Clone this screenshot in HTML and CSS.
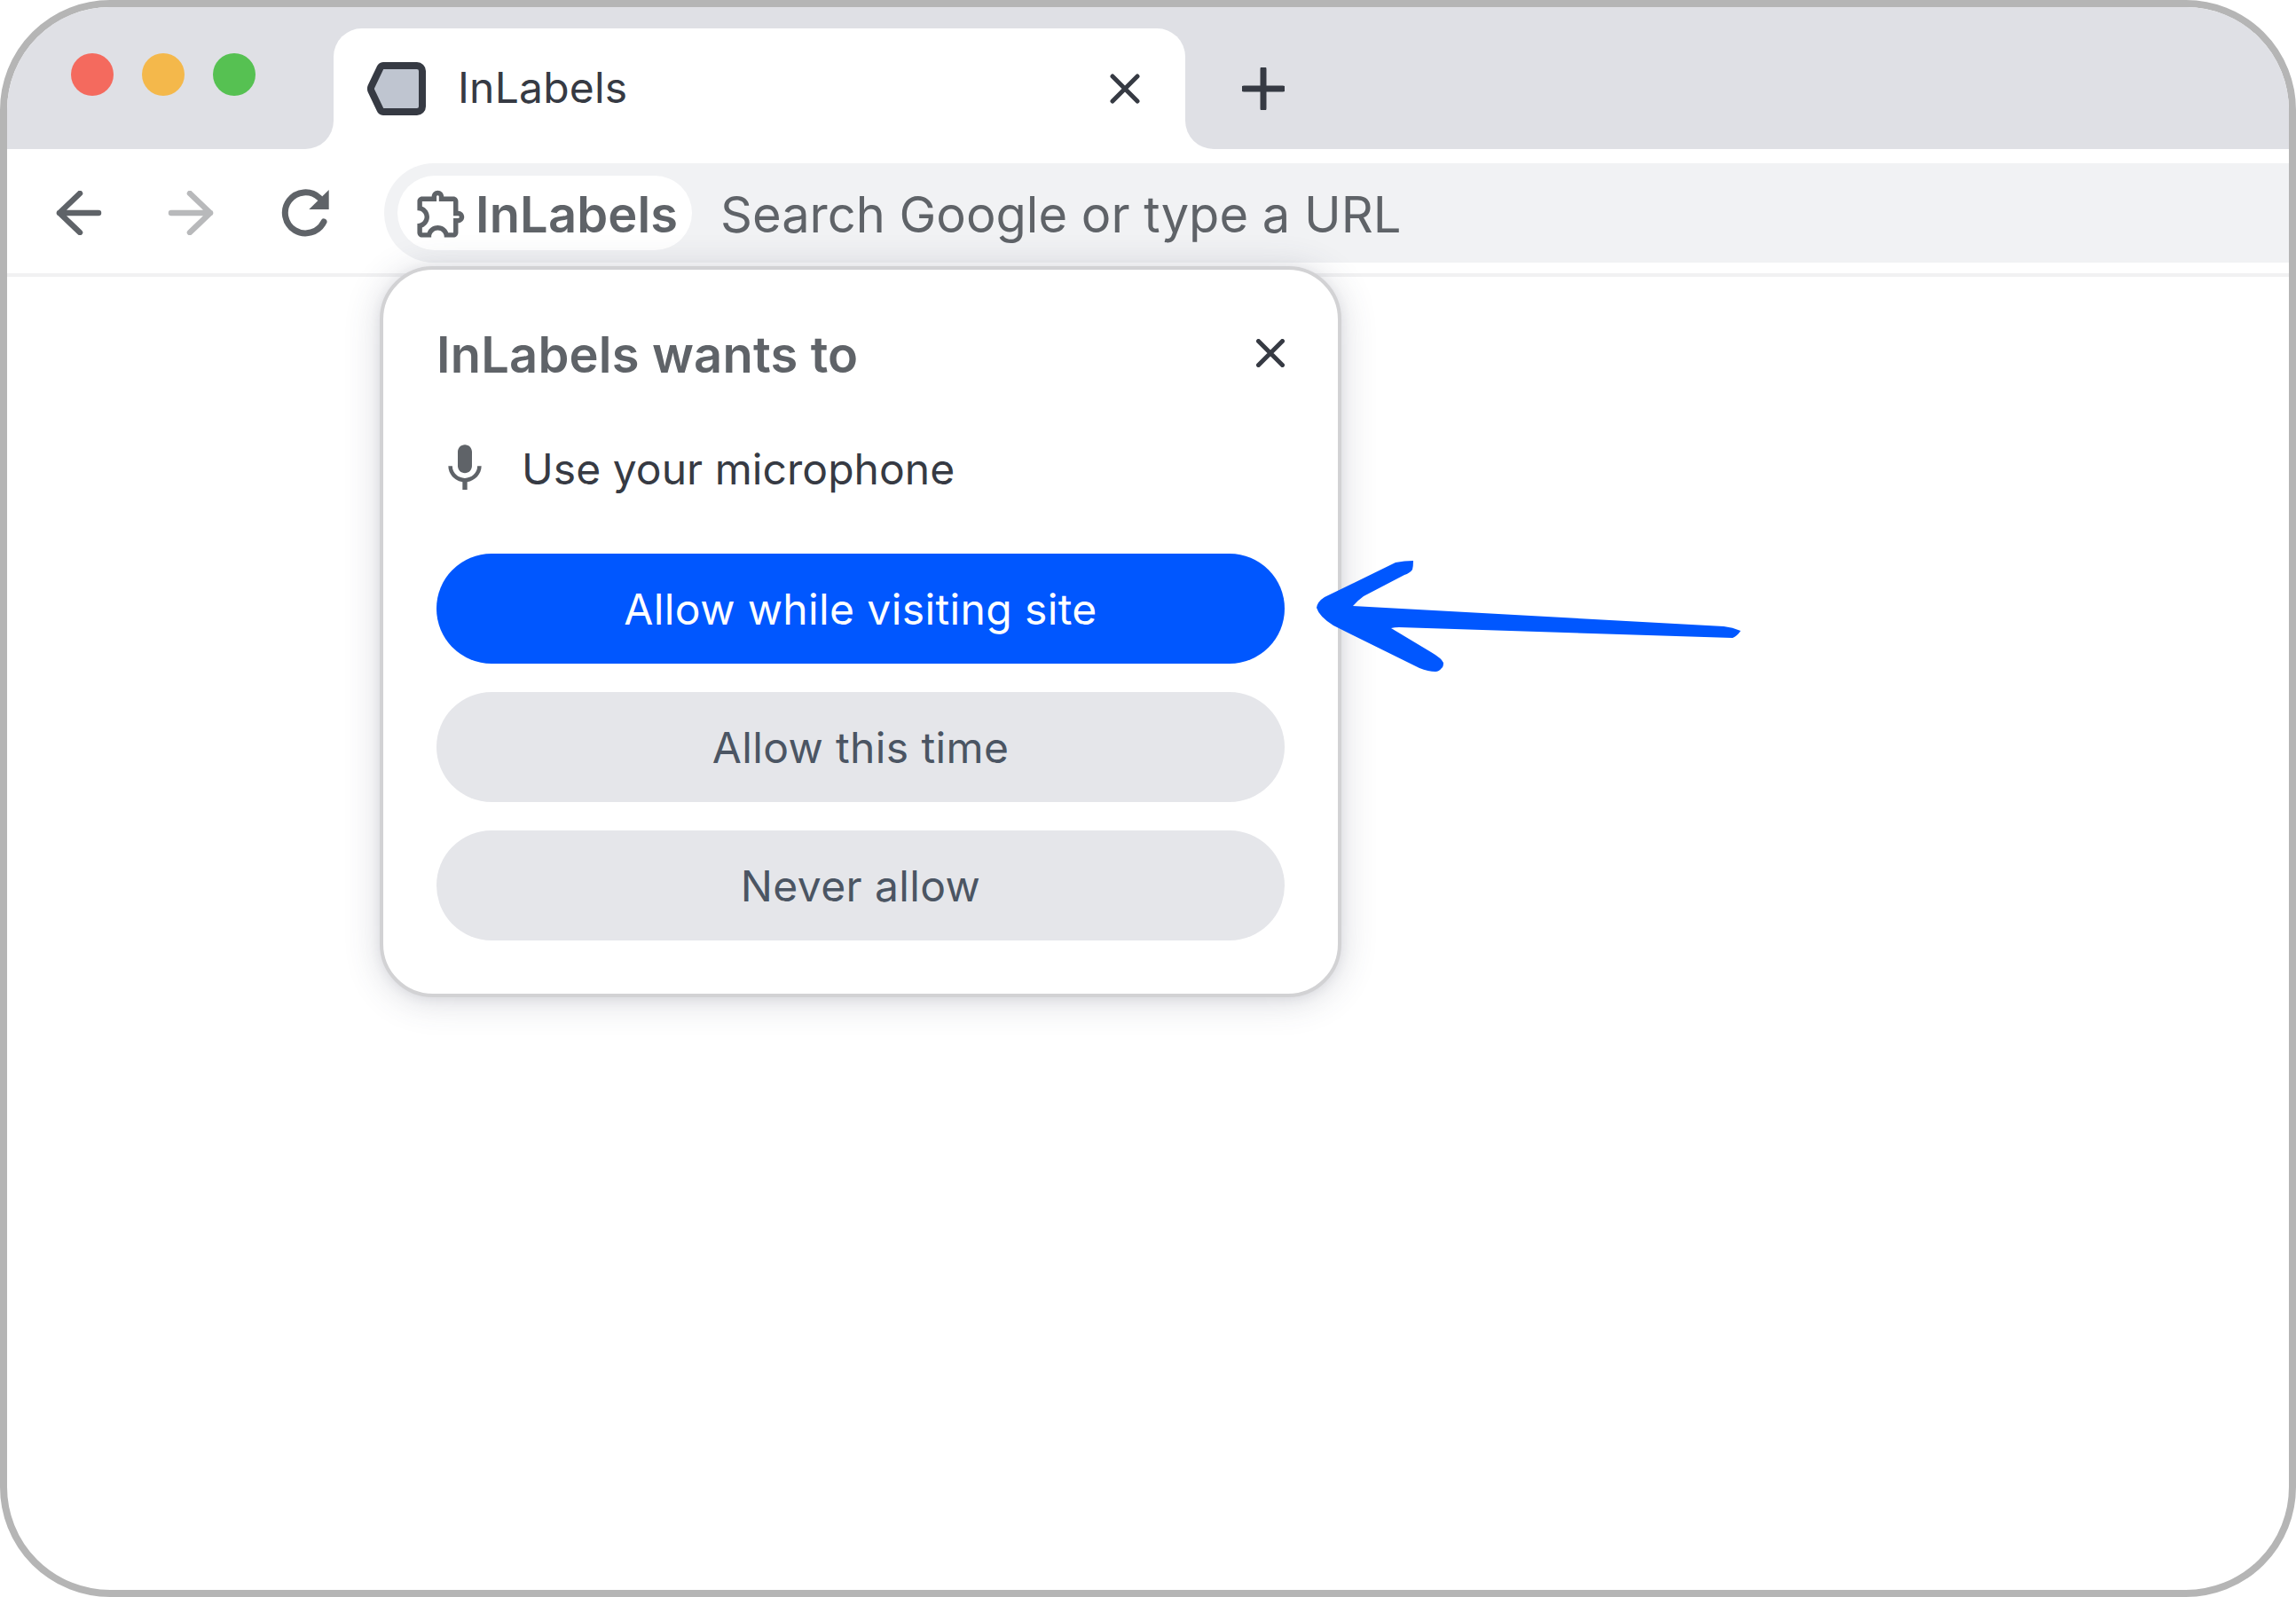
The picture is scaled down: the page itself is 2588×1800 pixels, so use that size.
FILE: index.html
```html
<!DOCTYPE html>
<html lang="en">
<head>
<meta charset="utf-8">
<title>InLabels</title>
<link rel="stylesheet" href="styles.css">
</head>
<body>
<div class="window">
  <header class="strip">
    <div class="strip-left">
      <span class="light red"></span>
      <span class="light yellow"></span>
      <span class="light green"></span>
    </div>
    <div class="tab-slot">
      <div class="tab">
        <svg class="tab-logo" viewBox="0 0 66 60"><path d="M18 4H56A6 6 0 0 1 62 10V50A6 6 0 0 1 56 56H18A4 4 0 0 1 14.5 53.5L4.5 32.5A6 6 0 0 1 4.5 27.5L14.5 6.5A4 4 0 0 1 18 4Z" fill="#BFC5D0" stroke="#363A43" stroke-width="8" stroke-linejoin="round"/></svg>
        <span class="tab-title">InLabels</span>
        <svg class="tab-close" viewBox="0 0 34 34"><path d="M3 3L31 31M31 3L3 31" fill="none" stroke="#363A43" stroke-width="5" stroke-linecap="round"/></svg>
      </div>
    </div>
    <div class="strip-right">
      <svg class="new-tab" viewBox="0 0 48 48"><path d="M24 2V46M2 24H46" fill="none" stroke="#363A43" stroke-width="7" stroke-linecap="round"/></svg>
    </div>
  </header>
  <nav class="toolbar">
    <svg class="nav-icon" viewBox="0 0 52 50"><path d="M48 25H4M27 3L4 25L27 47" fill="none" stroke="#5F6368" stroke-width="6.5" stroke-linecap="round" stroke-linejoin="round"/></svg>
    <svg class="nav-icon" viewBox="0 0 52 50"><path d="M4 25H48M25 3L48 25L25 47" fill="none" stroke="#B8B9BB" stroke-width="6.5" stroke-linecap="round" stroke-linejoin="round"/></svg>
    <svg class="nav-icon reload" viewBox="0 0 56 54"><path d="M45 10A23 23 0 1 0 50 37" fill="none" stroke="#5F6368" stroke-width="7" stroke-linecap="round"/><path d="M55.7 1V23H33.3Z" fill="#5F6368"/></svg>
    <div class="address">
      <div class="chip">
        <svg class="puzzle" viewBox="0 0 24 24"><path d="M10.5 4.5c.28 0 .5.22.5.5v2h6v6h2c.28 0 .5.22.5.5s-.22.5-.5.5h-2v6h-2.12c-.68-1.75-2.39-3-4.38-3s-3.7 1.25-4.38 3H4v-2.12c1.75-.68 3-2.39 3-4.38 0-1.99-1.24-3.7-2.99-4.38L4 7h6V5c0-.28.22-.5.5-.5m0-2C9.12 2.5 8 3.62 8 5H4c-1.1 0-1.99.9-1.99 2v3.8h.29c1.49 0 2.7 1.21 2.7 2.7s-1.21 2.7-2.7 2.7H2V20c0 1.1.9 2 2 2h3.8v-.3c0-1.49 1.21-2.7 2.7-2.7s2.7 1.21 2.7 2.7v.3H17c1.1 0 2-.9 2-2v-4c1.38 0 2.5-1.12 2.5-2.5S20.38 11 19 11V7c0-1.1-.9-2-2-2h-4c0-1.38-1.12-2.5-2.5-2.5z" fill="#5F6368"/></svg>
        <span class="chip-text">InLabels</span>
      </div>
      <span class="address-text">Search Google or type a URL</span>
    </div>
  </nav>
  <div class="rule"></div>
  <section class="popup">
    <div class="popup-head">
      <h1 class="popup-title">InLabels wants to</h1>
      <svg class="popup-close" viewBox="0 0 32 32"><path d="M2.5 2.5L29.5 29.5M29.5 2.5L2.5 29.5" fill="none" stroke="#363A43" stroke-width="5" stroke-linecap="round"/></svg>
    </div>
    <div class="permission">
      <svg class="mic" viewBox="0 0 24 24"><path d="M12 14c1.66 0 2.99-1.34 2.99-3L15 5c0-1.66-1.34-3-3-3S9 3.34 9 5v6c0 1.66 1.34 3 3 3zm5.3-3c0 3-2.54 5.1-5.3 5.1S6.7 14 6.7 11H5c0 3.41 2.72 6.23 6 6.72V21h2v-3.28c3.28-.48 6-3.3 6-6.72h-1.7z" fill="#5F6368"/></svg>
      <span class="permission-text">Use your microphone</span>
    </div>
    <div class="actions">
      <button class="btn primary">Allow while visiting site</button>
      <button class="btn">Allow this time</button>
      <button class="btn">Never allow</button>
    </div>
  </section>
  <svg class="arrow" viewBox="0 0 490 130"><path d="M9 53Q10 46 18 41L98 2Q108 0 118 0Q118 6 117 10Q114 14 108 16L62 40Q55 45 50 51L468 74Q478 75 487 79Q483 85 478 87L102 75Q97 75 93 76L138 103Q150 110 152 115Q152 120 150 121Q147 125 143 125Q135 125 125 121L28 73Q12 63 9 53Z" fill="#0057FF"/></svg>
</div>
</body>
</html>
```

FILE: styles.css
```css
* { box-sizing: border-box; }
html, body { margin: 0; padding: 0; background: #fff; }
body { width: 2588px; height: 1800px; overflow: hidden; font-family: Inter, "Liberation Sans", sans-serif; }

.window {
  position: relative;
  width: 2588px;
  height: 1800px;
  border: 8px solid #B5B5B5;
  border-radius: 124px;
  overflow: hidden;
  background: #fff;
}

.strip { display: flex; height: 160px; }
.strip-left {
  display: flex;
  gap: 32px;
  width: 368px;
  padding: 52px 0 0 72px;
  background: #DFE0E5;
  border-bottom-right-radius: 32px;
}
.light { width: 48px; height: 48px; border-radius: 50%; }
.red { background: #F46A5E; }
.yellow { background: #F4B84B; }
.green { background: #56C152; }

.tab-slot { width: 960px; padding-top: 24px; background: #DFE0E5; }
.tab {
  display: flex;
  align-items: center;
  height: 136px;
  padding: 0 51px 0 38px;
  background: #fff;
  border-radius: 32px 32px 0 0;
}
.tab-logo { width: 66px; height: 60px; flex: none; }
.tab-title { margin: 0 0 4px 36px; font-size: 48px; letter-spacing: 0.2px; color: #363A43; }
.tab-close { width: 34px; height: 34px; margin-left: auto; flex: none; }

.strip-right {
  flex: 1;
  display: flex;
  padding: 68px 0 0 64px;
  background: #DFE0E5;
  border-bottom-left-radius: 32px;
}
.new-tab { width: 48px; height: 48px; }

.toolbar {
  display: flex;
  align-items: center;
  height: 140px;
  padding: 16px 0 12px 55px;
}
.nav-icon { width: 52px; height: 50px; flex: none; margin-right: 74px; }
.nav-icon.reload { width: 56px; height: 54px; margin-right: 62px; }
.address {
  flex: 1;
  display: flex;
  align-items: center;
  height: 112px;
  padding-left: 15px;
  background: #F1F2F4;
  border-radius: 56px 0 0 56px;
}
.chip {
  display: flex;
  align-items: center;
  width: 332px;
  height: 84px;
  padding-left: 21px;
  background: #fff;
  border-radius: 42px;
}
.puzzle { width: 65px; height: 65px; margin-left: -4px; flex: none; }
.chip-text { margin: 4px 0 0 6px; font-size: 56px; font-weight: 560; letter-spacing: 0.15px; color: #5F6368; }
.address-text { margin: 4px 0 0 32px; font-size: 56px; color: #5F6368; }
.rule { height: 4px; background: #F1F1F2; }

.popup {
  position: absolute;
  left: 420px;
  top: 292px;
  width: 1084px;
  height: 824px;
  padding: 0 60px;
  background: #fff;
  border: 4px solid #D2D2D4;
  border-radius: 60px;
  box-shadow: 0 4px 40px rgba(60, 66, 90, 0.2), 0 2px 12px rgba(60, 66, 90, 0.08);
}
.popup-head {
  display: flex;
  align-items: center;
  justify-content: space-between;
  height: 190px;
}
.popup-title { margin: 2px 0 0; font-size: 56px; font-weight: 600; letter-spacing: 0.2px; color: #5F6368; }
.popup-close { width: 32px; height: 32px; margin-bottom: 2px; flex: none; }
.permission { display: flex; align-items: center; height: 64px; margin-top: 2px; }
.mic { width: 64px; height: 64px; flex: none; }
.permission-text { margin-left: 32px; font-size: 48px; letter-spacing: 0.05px; color: #363A43; }
.actions { display: flex; flex-direction: column; gap: 32px; margin-top: 64px; }
.btn {
  display: block;
  width: 100%;
  height: 124px;
  border: 0;
  border-radius: 62px;
  background: #E5E6EA;
  color: #4B5563;
  font: 400 48px Inter, "Liberation Sans", sans-serif;
  letter-spacing: 0.38px;
}
.btn.primary { background: #0057FF; color: #fff; }

.arrow {
  position: absolute;
  left: 1467px;
  top: 624px;
  width: 490px;
  height: 130px;
  overflow: visible;
}
```
